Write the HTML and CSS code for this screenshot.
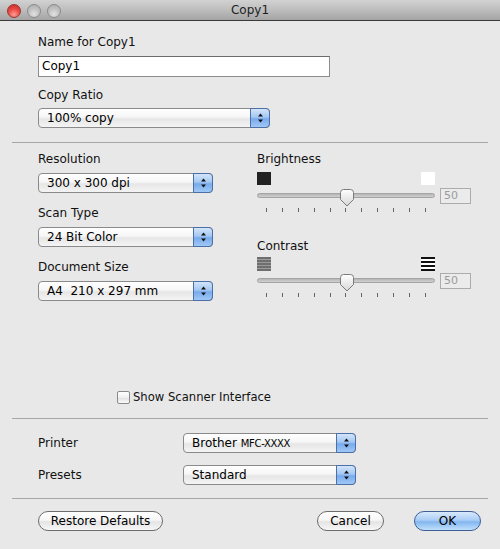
FILE: index.html
```html
<!DOCTYPE html>
<html>
<head>
<meta charset="utf-8">
<link rel="stylesheet" href="styles.css">
</head>
<body>
<div class="window">
  <div class="titlebar">
    <div class="lights"><span class="light red"></span><span class="light"></span><span class="light"></span></div>
    <div class="title">Copy1</div>
    <div></div>
  </div>

  <div class="sec-name">
    <div class="label">Name for Copy1</div>
    <div class="textfield">Copy1</div>
    <div class="label label-gap">Copy Ratio</div>
    <div class="popup w-ratio"><span class="ptext">100% copy</span><span class="parrow"><svg width="7" height="12" viewBox="0 0 7 12"><path d="M3.5 1.5 L6 4.5 H1 Z" fill="#111"/><path d="M3.5 10.5 L6 7.5 H1 Z" fill="#111"/></svg></span></div>
  </div>

  <div class="sep"></div>

  <div class="sec-scan">
    <div class="col-left">
      <div class="group">
        <div class="label">Resolution</div>
        <div class="popup w-left"><span class="ptext">300 x 300 dpi</span><span class="parrow"><svg width="7" height="12" viewBox="0 0 7 12"><path d="M3.5 1.5 L6 4.5 H1 Z" fill="#111"/><path d="M3.5 10.5 L6 7.5 H1 Z" fill="#111"/></svg></span></div>
      </div>
      <div class="group">
        <div class="label">Scan Type</div>
        <div class="popup w-left"><span class="ptext">24 Bit Color</span><span class="parrow"><svg width="7" height="12" viewBox="0 0 7 12"><path d="M3.5 1.5 L6 4.5 H1 Z" fill="#111"/><path d="M3.5 10.5 L6 7.5 H1 Z" fill="#111"/></svg></span></div>
      </div>
      <div class="group">
        <div class="label">Document Size</div>
        <div class="popup w-left"><span class="ptext">A4&nbsp; 210 x 297 mm</span><span class="parrow"><svg width="7" height="12" viewBox="0 0 7 12"><path d="M3.5 1.5 L6 4.5 H1 Z" fill="#111"/><path d="M3.5 10.5 L6 7.5 H1 Z" fill="#111"/></svg></span></div>
      </div>
    </div>

    <div class="col-right">
      <div class="label">Brightness</div>
      <div class="icons icons-bright"><span class="sq-black"></span><span class="sq-white"></span></div>
      <div class="slider-row">
        <div class="track-wrap">
          <div class="track"></div>
          <svg class="thumb" width="16" height="18" viewBox="0 0 16 18"><defs><linearGradient id="tg1" x1="0" y1="0" x2="0" y2="1"><stop offset="0" stop-color="#ffffff"/><stop offset="1" stop-color="#d6d6d6"/></linearGradient></defs><path d="M1.5 3.5 Q1.5 0.5 4.5 0.5 H11.5 Q14.5 0.5 14.5 3.5 V10.5 L8 17 L1.5 10.5 Z" fill="url(#tg1)" stroke="#7a7a7a"/></svg>
        </div>
        <div class="numfield">50</div>
      </div>
      <div class="ticks"><i></i><i></i><i></i><i></i><i></i><i></i><i></i><i></i><i></i><i></i><i></i></div>

      <div class="label label-contrast">Contrast</div>
      <div class="icons icons-contrast"><span class="stripe-gray"></span><span class="stripe-black"></span></div>
      <div class="slider-row slider-contrast">
        <div class="track-wrap">
          <div class="track"></div>
          <svg class="thumb" width="16" height="18" viewBox="0 0 16 18"><defs><linearGradient id="tg2" x1="0" y1="0" x2="0" y2="1"><stop offset="0" stop-color="#ffffff"/><stop offset="1" stop-color="#d6d6d6"/></linearGradient></defs><path d="M1.5 3.5 Q1.5 0.5 4.5 0.5 H11.5 Q14.5 0.5 14.5 3.5 V10.5 L8 17 L1.5 10.5 Z" fill="url(#tg2)" stroke="#7a7a7a"/></svg>
        </div>
        <div class="numfield">50</div>
      </div>
      <div class="ticks"><i></i><i></i><i></i><i></i><i></i><i></i><i></i><i></i><i></i><i></i><i></i></div>
    </div>
  </div>

  <div class="checkrow"><span class="checkbox"></span><span>Show Scanner Interface</span></div>

  <div class="sep"></div>

  <div class="sec-printer">
    <div class="plabel">Printer</div>
    <div class="popup w-printer"><span class="ptext">Brother <span class="model">MFC-XXXX</span></span><span class="parrow"><svg width="7" height="12" viewBox="0 0 7 12"><path d="M3.5 1.5 L6 4.5 H1 Z" fill="#111"/><path d="M3.5 10.5 L6 7.5 H1 Z" fill="#111"/></svg></span></div>
    <div class="plabel">Presets</div>
    <div class="popup w-printer"><span class="ptext">Standard</span><span class="parrow"><svg width="7" height="12" viewBox="0 0 7 12"><path d="M3.5 1.5 L6 4.5 H1 Z" fill="#111"/><path d="M3.5 10.5 L6 7.5 H1 Z" fill="#111"/></svg></span></div>
  </div>

  <div class="sep"></div>

  <div class="buttons">
    <div class="btn btn-restore">Restore Defaults</div>
    <div class="btn btn-cancel">Cancel</div>
    <div class="btn btn-ok">OK</div>
  </div>
</div>
</body>
</html>
```

FILE: styles.css
```css
html, body {
  margin: 0;
  padding: 0;
}
body {
  width: 500px;
  height: 549px;
  overflow: hidden;
  background: #e8e8e8;
  font-family: "DejaVu Sans", "Liberation Sans", sans-serif;
  font-size: 12px;
  color: #111;
}

/* title bar */
.titlebar {
  height: 20px;
  border-bottom: 1px solid #3a3a3a;
  background: linear-gradient(#d2d2d2, #bdbdbd 50%, #a4a4a4);
  display: grid;
  grid-template-columns: 1fr auto 1fr;
  align-items: center;
}
.lights {
  display: flex;
  gap: 6px;
  padding-left: 7px;
  padding-top: 1px;
}
.light {
  width: 14px;
  height: 14px;
  box-sizing: border-box;
  border-radius: 50%;
  border: 1px solid #8a8a8a;
  background: radial-gradient(circle at 50% 75%, #e2e2e2 0%, #c4c4c4 45%, #a9a9a9 100%);
}
.light.red {
  border-color: #9b3434;
  background: radial-gradient(circle at 50% 80%, #ff9c94 0%, #ea4a44 50%, #c02a28 100%);
}
.title {
  font-size: 12px;
  color: #1e1e1e;
}

/* common */
.label {
  height: 16px;
  line-height: 16px;
}
.sep {
  height: 1px;
  margin: 0 12px;
  background: #a6a6a6;
}

.textfield {
  margin-top: 6px;
  width: 292px;
  height: 21px;
  box-sizing: border-box;
  border: 1px solid #8c8c8c;
  border-top-color: #6c6c6c;
  background: #fff;
  padding-left: 3px;
  font-size: 12px;
  line-height: 19px;
  color: #000;
}

.popup {
  display: flex;
  height: 20px;
  box-sizing: border-box;
  border: 1px solid #8a8a8a;
  border-radius: 4px;
  background: linear-gradient(#ffffff 0%, #f6f6f6 45%, #e6e6e6 55%, #f4f4f4 100%);
  font-size: 12px;
  line-height: 18px;
  color: #000;
}
.ptext {
  flex: 1;
  padding-left: 8px;
  white-space: nowrap;
}
.parrow {
  width: 20px;
  height: 20px;
  margin: -1px -1px -1px 0;
  box-sizing: border-box;
  border: 1px solid #4b6fa8;
  border-radius: 0 4px 4px 0;
  background: linear-gradient(#d4e5f9 0%, #a3c7f3 45%, #78aaec 55%, #a0c8f6 100%);
  display: flex;
  align-items: center;
  justify-content: center;
}
.model {
  font-size: 10px;
  letter-spacing: -0.3px;
}

/* name section */
.sec-name {
  padding: 13px 0 14px 38px;
}
.label-gap {
  margin-top: 10px;
}
.sec-name .popup {
  margin-top: 5px;
}
.w-ratio { width: 232px; }
.w-left { width: 175px; }
.w-printer { width: 173px; }

/* scan section */
.sec-scan {
  display: flex;
  padding: 8px 0 0 38px;
}
.col-left {
  width: 175px;
  display: flex;
  flex-direction: column;
  gap: 12px;
}
.group .popup {
  margin-top: 6px;
}
.col-right {
  margin-left: 44px;
  width: 214px;
}
.icons {
  width: 178px;
  display: flex;
  justify-content: space-between;
}
.icons-bright {
  margin-top: 5px;
  height: 13px;
}
.sq-black {
  width: 14px;
  height: 13px;
  background: #222;
}
.sq-white {
  width: 14px;
  height: 13px;
  background: #fff;
}
.icons-contrast {
  margin-top: 3px;
  height: 14px;
}
.stripe-gray {
  width: 14px;
  height: 14px;
  background: repeating-linear-gradient(#6e6e6e 0 2px, #9c9c9c 2px 3px);
}
.stripe-black {
  width: 14px;
  height: 14px;
  background: repeating-linear-gradient(#111 0 2px, #fff 2px 4px);
}
.slider-row {
  display: flex;
  margin-top: 3px;
  height: 18px;
}
.slider-contrast {
  margin-top: 2px;
}
.track-wrap {
  position: relative;
  width: 178px;
  height: 18px;
}
.track {
  margin-top: 5px;
  height: 5px;
  box-sizing: border-box;
  border: 1px solid #a4a4a4;
  border-radius: 3px;
  background: linear-gradient(#b6b6b6, #d0d0d0);
}
.thumb {
  position: absolute;
  left: 82px;
  top: 1px;
}
.numfield {
  margin-left: 5px;
  width: 31px;
  height: 16px;
  box-sizing: border-box;
  border: 1px solid #acacac;
  background: #ebebeb;
  color: #9a9a9a;
  padding-left: 3px;
  line-height: 14px;
  font-size: 11px;
}
.ticks {
  width: 178px;
  box-sizing: border-box;
  padding: 0 9px;
  margin-top: 2px;
  height: 4px;
  display: flex;
  justify-content: space-between;
}
.ticks i {
  width: 1px;
  height: 4px;
  background: #666;
}
.label-contrast {
  margin-top: 26px;
}

/* checkbox */
.checkrow {
  margin-top: 88px;
  margin-bottom: 13px;
  padding-left: 117px;
  height: 16px;
  display: flex;
  align-items: center;
  gap: 3px;
  line-height: 16px;
  font-size: 11.6px;
}
.checkbox {
  width: 13px;
  height: 13px;
  box-sizing: border-box;
  border: 1px solid #8a8a8a;
  border-radius: 2px;
  background: linear-gradient(#ffffff, #f0f0f0 50%, #e2e2e2 55%, #fafafa);
}

/* printer section */
.sec-printer {
  display: grid;
  grid-template-columns: 145px 173px;
  row-gap: 12px;
  align-items: center;
  padding: 14px 0 13px 38px;
}
.plabel {
  line-height: 16px;
}

/* buttons */
.buttons {
  display: flex;
  padding: 12px 19px 0 38px;
}
.btn {
  height: 20px;
  box-sizing: border-box;
  border: 1px solid #6c6c6c;
  border-radius: 10px;
  background: linear-gradient(#ffffff 0%, #f6f6f6 45%, #e4e4e4 55%, #f7f7f7 100%);
  font-size: 12px;
  line-height: 18px;
  text-align: center;
  color: #000;
}
.btn-restore { width: 125px; }
.btn-cancel { width: 67px; margin-left: auto; }
.btn-ok {
  width: 67px;
  margin-left: 30px;
  border-color: #3f5f95;
  background: linear-gradient(#d8e9fc 0%, #aacdf6 45%, #83b6f0 55%, #bfe0fc 100%);
}
```
